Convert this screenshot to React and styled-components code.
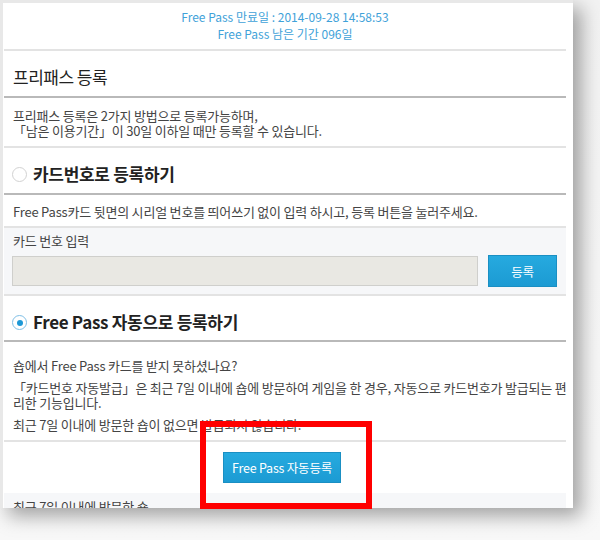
import React from 'react';
import styled, { createGlobalStyle } from 'styled-components';

const GlobalStyle = createGlobalStyle`
  body {
    margin: 0;
    background: #f4f4f4;
    font-family: "Noto Sans CJK KR", "Liberation Sans", sans-serif;
  }
`;

const Stage = styled.div`
  position: relative;
  width: 600px;
  height: 540px;
  overflow: hidden;
  background: linear-gradient(#f2f2f2, #f8f8f8);
`;

const Panel = styled.div`
  width: 566px;
  height: 505px;
  padding-right: 4px;
  background: #fff;
  border-top: 3px solid #e8e8e8;
  border-left: 3px solid #e8e8e8;
  box-shadow: 8px 8px 18px rgba(0, 0, 0, 0.35);
  overflow: hidden;
`;

const Content = styled.div`
  margin-left: 1px;
  width: 562px;
`;

const Info = styled.div`
  height: 46px;
  padding-top: 5px;
  box-sizing: border-box;
  text-align: center;
  color: #3fa2d9;
  font-size: 12px;
  line-height: 17px;
`;

const Divider = styled.div`
  height: 2px;
  background: ${p => (p.dark ? '#b9b9b9' : '#e3e3e3')};
`;

const TitleRow = styled.div`
  height: 45px;
  display: flex;
  align-items: flex-end;
  padding: 0 0 7px 9px;
  box-sizing: border-box;
  font-size: 17px;
  color: #222;
  letter-spacing: -0.5px;
`;

const TextBlock = styled.div`
  padding: ${p => p.pad || '6px 0 7px 9px'};
  font-size: 13px;
  line-height: 15px;
  color: #444;
  letter-spacing: -0.2px;

  p {
    margin: 0 0 ${p => p.gap || 0}px;
    white-space: nowrap;
  }
  p:last-child {
    margin-bottom: 0;
  }
`;

const OptionRow = styled.div`
  height: ${p => p.h}px;
  display: flex;
  align-items: flex-end;
  gap: 6px;
  padding: 0 0 ${p => p.pb || 6}px 8px;
  box-sizing: border-box;
  font-size: 17px;
  font-weight: bold;
  color: #222;
  letter-spacing: -0.3px;
`;

const Radio = styled.span`
  width: 15px;
  height: 15px;
  border-radius: 50%;
  border: 1px solid ${p => (p.checked ? '#7fbfe6' : '#d2d2d2')};
  background: #fff;
  box-sizing: border-box;
  display: flex;
  align-items: center;
  justify-content: center;
  margin-bottom: 4px;

  &::after {
    content: '';
    width: 6px;
    height: 6px;
    border-radius: 50%;
    background: ${p => (p.checked ? '#1d98d6' : 'transparent')};
  }
`;

const InputSection = styled.div`
  height: 66px;
  background: #f6f7f9;
  padding: 5px 9px 0 8px;
  box-sizing: border-box;
`;

const Label = styled.div`
  font-size: 13px;
  color: #444;
  line-height: 16px;
  margin-left: 1px;
  letter-spacing: -0.2px;
`;

const InputRow = styled.div`
  display: flex;
  align-items: center;
  gap: 10px;
  margin-top: 6px;
`;

const CardInput = styled.div`
  width: 466px;
  height: 30px;
  box-sizing: border-box;
  border: 1px solid #cfcfcc;
  background: #e9e8e3;
`;

const BlueButton = styled.button`
  width: ${p => p.w}px;
  height: ${p => p.h}px;
  border: 1px solid #1a8fc3;
  background: linear-gradient(#26aadf, #1c9bd3);
  color: #fff;
  font-family: inherit;
  font-size: 12.5px;
  padding: 0;
  letter-spacing: -0.2px;
`;

const ButtonArea = styled.div`
  height: 51px;
  display: flex;
  justify-content: center;
  padding-top: 10px;
  box-sizing: border-box;
  padding-right: 6px;
`;

const ShopSection = styled.div`
  background: #f6f7f9;
  height: 40px;
  padding: 4px 0 0 9px;
  box-sizing: border-box;
  font-size: 13px;
  color: #444;
  letter-spacing: -0.2px;
`;

const Highlight = styled.div`
  position: absolute;
  left: 200px;
  top: 421px;
  width: 172px;
  height: 88px;
  box-sizing: border-box;
  border: 6px solid #ff0000;
`;

export default function App() {
  return (
    <Stage>
      <GlobalStyle />
      <Panel>
        <Content>
          <Info>
            <div>Free Pass 만료일 : 2014-09-28 14:58:53</div>
            <div>Free Pass 남은 기간 096일</div>
          </Info>
          <Divider />
          <TitleRow>프리패스 등록</TitleRow>
          <Divider dark />
          <TextBlock pad="10px 0 8px 9px">
            <p>프리패스 등록은 2가지 방법으로 등록가능하며,</p>
            <p>「남은 이용기간」이 30일 이하일 때만 등록할 수 있습니다.</p>
          </TextBlock>
          <Divider />
          <OptionRow h={45} pb={7}>
            <Radio />
            카드번호로 등록하기
          </OptionRow>
          <Divider dark />
          <TextBlock pad="9px 0 7px 9px">
            <p>Free Pass카드 뒷면의 시리얼 번호를 띄어쓰기 없이 입력 하시고, 등록 버튼을 눌러주세요.</p>
          </TextBlock>
          <Divider />
          <InputSection>
            <Label>카드 번호 입력</Label>
            <InputRow>
              <CardInput />
              <BlueButton w={69} h={32}>등록</BlueButton>
            </InputRow>
          </InputSection>
          <Divider />
          <OptionRow h={44} pb={6}>
            <Radio checked />
            Free Pass 자동으로 등록하기
          </OptionRow>
          <Divider dark />
          <TextBlock pad="16px 0 8px 9px" gap={7}>
            <p>숍에서 Free Pass 카드를 받지 못하셨나요?</p>
            <p>「카드번호 자동발급」은 최근 7일 이내에 숍에 방문하여 게임을 한 경우, 자동으로 카드번호가 발급되는 편<br />리한 기능입니다.</p>
            <p>최근 7일 이내에 방문한 숍이 없으면 발급되지 않습니다.</p>
          </TextBlock>
          <Divider />
          <ButtonArea>
            <BlueButton w={118} h={31}>Free Pass 자동등록</BlueButton>
          </ButtonArea>
          <ShopSection>최근 7일 이내에 방문한 숍</ShopSection>
        </Content>
      </Panel>
      <Highlight />
    </Stage>
  );
}
